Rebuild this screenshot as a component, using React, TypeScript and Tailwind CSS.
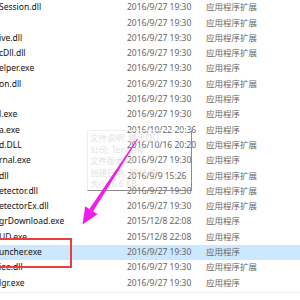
const rows: [string, string, string][] = [
  ['Session.dll', '2016/9/27 19:30', '应用程序扩展'],
  ['', '2016/9/27 19:30', '应用程序扩展'],
  ['ive.dll', '2016/9/27 19:30', '应用程序扩展'],
  ['cDll.dll', '2016/9/27 19:30', '应用程序扩展'],
  ['elper.exe', '2016/9/27 19:30', '应用程序'],
  ['on.dll', '2016/9/27 19:30', '应用程序扩展'],
  ['', '2016/9/27 19:30', '应用程序'],
  ['l.exe', '2016/9/27 19:30', '应用程序'],
  ['a.exe', '2016/10/22 20:36', '应用程序'],
  ['d.DLL', '2016/10/16 20:20', '应用程序扩展'],
  ['rnal.exe', '2016/9/27 19:30', '应用程序'],
  ['dll', '2016/9/9 15:26', '应用程序扩展'],
  ['etector.dll', '2016/9/27 19:30', '应用程序扩展'],
  ['etectorEx.dll', '2016/9/27 19:30', '应用程序扩展'],
  ['grDownload.exe', '2015/12/8 22:08', '应用程序'],
  ['UD.exe', '2015/12/8 22:08', '应用程序'],
  ['uncher.exe', '2016/9/27 19:30', '应用程序'],
  ['iee.dll', '2016/9/27 19:30', '应用程序扩展'],
  ['lgr.exe', '2016/9/27 19:30', '应用程序'],
];

const SELECTED = 16;

export default function App() {
  return (
    <div className="relative w-[300px] h-[300px] overflow-hidden bg-white font-['Noto_Sans','Noto_Sans_CJK_SC',sans-serif] text-[8.5px]">
      <div className="flex flex-col border-b border-[#f0f0f0] pb-px">
        {rows.map(([name, date, type], i) => (
          <div
            key={i}
            className={`flex items-center h-[15.3px] ${i === SELECTED ? 'bg-[#cce8ff]' : ''}`}
          >
            <span className="w-[128px] -ml-px text-[#111] whitespace-nowrap">{name}</span>
            <span className="w-[79px] text-[#666] whitespace-nowrap">{date}</span>
            <span className="text-[#666] whitespace-nowrap">{type}</span>
          </div>
        ))}
      </div>

      {/* fading tooltip */}
      <div className="absolute left-[87px] top-[130px] w-[105px] h-[61px] border-l border-t border-[#efefef] border-r border-b border-r-[#8c8c8c] border-b-[#8c8c8c] px-[2px] pt-[1px] text-[#e2e2e2] leading-[11.5px]">
        <div>文件说明: 腾讯QQ</div>
        <div>公司: Tencent</div>
        <div>文件版本: 8.7</div>
        <div>创建日期: 2016/9</div>
        <div>大小: 6.6 KB</div>
      </div>

      {/* red highlight box */}
      <div className="absolute -left-[4px] top-[238px] w-[76px] h-[30px] border-2 border-[#ee3b3b]" />

      {/* magenta arrow */}
      <svg className="absolute inset-0 pointer-events-none" width="300" height="300" viewBox="0 0 300 300">
        <polygon points="137.1,138.8 137.9,139.2 93,211.6 89.2,209.2" fill="#ee1ee8" />
        <polygon points="82.5,224.5 85.2,206.2 97.6,214.2" fill="#ee1ee8" />
      </svg>
    </div>
  );
}
